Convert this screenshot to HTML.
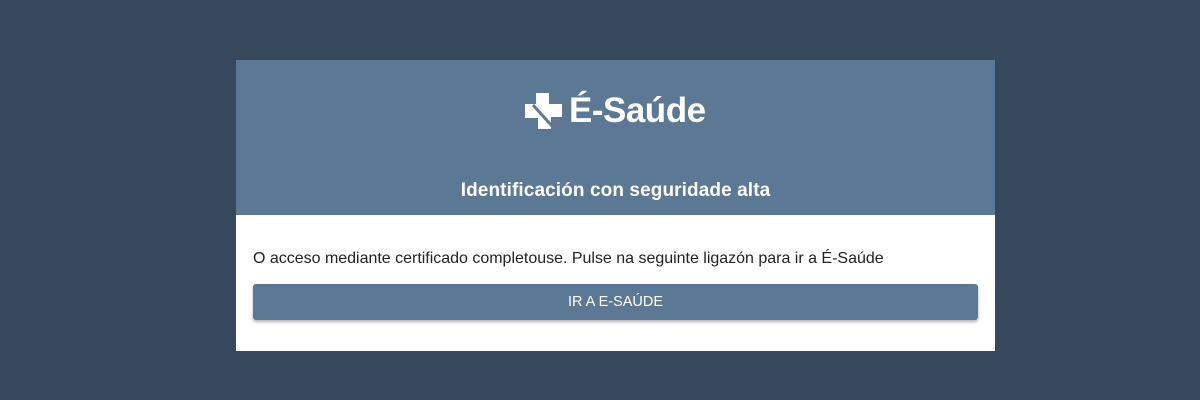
<!DOCTYPE html>
<html><head><meta charset="utf-8"><style>
body{margin:0;width:1200px;height:400px;background:#36495c;font-family:"Liberation Sans",sans-serif;position:relative;overflow:hidden}
.card{position:absolute;left:236px;top:60px;width:759px;height:291px;background:#fff}
.head{height:155px;background:#5b7995;position:relative;color:#fff}
.logo{position:absolute;left:289px;top:33px}
.brand{position:absolute;left:333px;top:31px;font-size:35px;font-weight:bold;letter-spacing:-0.5px}
.sub{position:absolute;left:0;right:0;top:120px;text-align:center;font-size:19px;font-weight:bold;letter-spacing:0.1px}
.msg{position:absolute;left:17px;top:190px;font-size:16px;letter-spacing:-0.01px;color:#222}
.btn{position:absolute;left:17px;top:224px;width:725px;height:36px;background:#5b7995;border-radius:3px;box-shadow:0 2px 3px rgba(0,0,0,.3);color:#fff;text-align:center;line-height:36px;font-size:14.5px}
</style></head><body>
<div class="card">
<div class="head">
<svg class="logo" width="38" height="36" viewBox="0 0 38 36"><path d="M11 0H24V11H37V24H26V36H13V25H0V11H11Z" fill="#fff"/><path d="M8 12L27 33" stroke="#5b7995" stroke-width="3"/></svg>
<div class="brand">É-Saúde</div>
<div class="sub">Identificación con seguridade alta</div>
</div>
<div class="msg">O acceso mediante certificado completouse. Pulse na seguinte ligazón para ir a É-Saúde</div>
<div class="btn">IR A E-SAÚDE</div>
</div>
</body></html>
